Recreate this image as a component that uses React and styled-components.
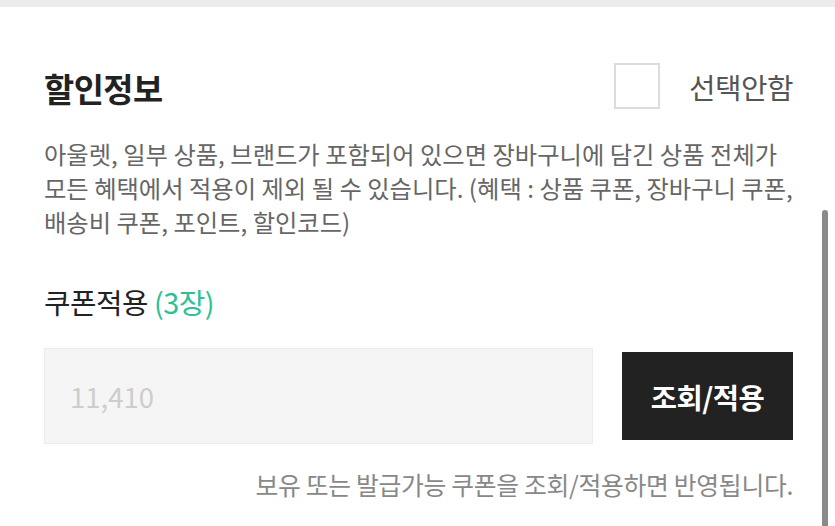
import React from "react";
import styled, { createGlobalStyle } from "styled-components";

const GlobalStyle = createGlobalStyle`
  html, body {
    margin: 0;
    padding: 0;
    background: #fff;
    font-family: "Noto Sans CJK KR", "Noto Sans", sans-serif;
    overflow: hidden;
  }
`;

const Page = styled.div`
  position: relative;
  width: 835px;
  height: 526px;
  overflow: hidden;
  background: #fff;
`;

const TopBand = styled.div`
  height: 7px;
  background: #ececec;
`;

const Content = styled.main`
  padding: 57px 42px 0 44px;
`;

const Header = styled.div`
  display: flex;
  align-items: center;
  justify-content: space-between;
  height: 44px;
`;

const Title = styled.h2`
  margin: 2px 0 0;
  font-size: 32.8px;
  font-weight: 700;
  color: #222;
  letter-spacing: -0.5px;
`;

const Choice = styled.label`
  display: flex;
  align-items: center;
  gap: 29px;
  font-size: 28.8px;
  color: #555;
  letter-spacing: -0.5px;
`;

const Box = styled.span`
  display: block;
  width: 42px;
  height: 42px;
  border: 2px solid #dcdcdc;
  background: #fff;
`;

const Desc = styled.p`
  margin: 29px 0 0;
  font-size: 24.3px;
  line-height: 34px;
  color: #666;
  white-space: nowrap;
`;

const Label = styled.h3`
  margin: 46px 0 0;
  font-size: 28.8px;
  line-height: 34px;
  font-weight: 400;
  color: #222;
  letter-spacing: -0.5px;

  em {
    font-style: normal;
    color: #2cc195;
  }
`;

const InputRow = styled.div`
  display: flex;
  align-items: center;
  justify-content: space-between;
  margin-top: 29px;
`;

const Field = styled.div`
  box-sizing: border-box;
  width: 549px;
  height: 96px;
  display: flex;
  align-items: center;
  padding-left: 25px;
  background: #f5f5f5;
  border: 1px solid #ececec;
  font-size: 27.5px;
  color: #cdcdcd;
`;

const Button = styled.button`
  width: 171px;
  height: 88px;
  border: 0;
  background: #222;
  color: #fff;
  font-family: inherit;
  font-size: 28.5px;
  font-weight: 700;
  letter-spacing: -0.5px;
`;

const Note = styled.p`
  margin: 25px 0 0;
  text-align: right;
  font-size: 24.8px;
  line-height: 30px;
  color: #888;
  letter-spacing: -0.3px;
`;

const Scrollbar = styled.div`
  position: absolute;
  right: 7px;
  top: 210px;
  bottom: 0;
  width: 6px;
  border-radius: 3px 3px 0 0;
  background: #8a8a8a;
`;

export default function App() {
  return (
    <Page>
      <GlobalStyle />
      <TopBand />
      <Content>
        <Header>
          <Title>할인정보</Title>
          <Choice>
            <Box />
            선택안함
          </Choice>
        </Header>
        <Desc>
          아울렛, 일부 상품, 브랜드가 포함되어 있으면 장바구니에 담긴 상품 전체가
          <br />
          모든 혜택에서 적용이 제외 될 수 있습니다. (혜택 : 상품 쿠폰, 장바구니 쿠폰,
          <br />
          배송비 쿠폰, 포인트, 할인코드)
        </Desc>
        <Label>
          쿠폰적용 <em>(3장)</em>
        </Label>
        <InputRow>
          <Field>11,410</Field>
          <Button>조회/적용</Button>
        </InputRow>
        <Note>보유 또는 발급가능 쿠폰을 조회/적용하면 반영됩니다.</Note>
      </Content>
      <Scrollbar />
    </Page>
  );
}
